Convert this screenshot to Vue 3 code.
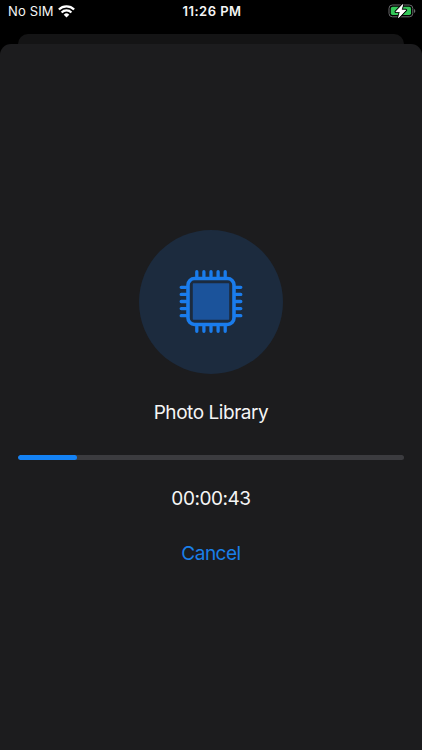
<script setup>
import { computed, ref } from 'vue';

const emit = defineEmits(['cancel']);

const title = ref('Photo Library');
const elapsed = ref(43);
const progress = ref(15.2);

const pins = [-14.2, -7.1, 0, 7.1, 14.2];

const elapsedLabel = computed(() => {
    const pad = (value) => String(value).padStart(2, '0');
    const hours = Math.floor(elapsed.value / 3600);
    const minutes = Math.floor((elapsed.value % 3600) / 60);

    return `${pad(hours)}:${pad(minutes)}:${pad(elapsed.value % 60)}`;
});
</script>

<template>
    <div class="screen">
        <header class="status-bar">
            <div class="status-left">
                <span class="carrier">No SIM</span>
                <svg class="wifi" width="17" height="13" viewBox="0 0 17 13" fill="none" stroke="#fff" stroke-width="2.3">
                    <path d="M.9 4.5a10.8 10.8 0 0 1 15.2 0" />
                    <path d="M3.6 7.5a6.9 6.9 0 0 1 9.8 0" />
                    <path d="M8.5 12.5 5.7 9.7a4 4 0 0 1 5.6 0z" fill="#fff" stroke="none" />
                </svg>
            </div>
            <span class="clock">11:26 PM</span>
            <div class="status-right">
                <svg width="28" height="16" viewBox="0 0 28 16">
                    <rect x="1" y="2" width="23.8" height="11.8" rx="3.4" fill="none" stroke="#68686b" />
                    <path d="M26 6v4c1.8-.6 1.8-3.4 0-4z" fill="#68686b" />
                    <rect x="2.8" y="3.8" width="20.2" height="8.2" rx="1.8" fill="#34c759" />
                    <path d="M14.8 1.4 7.9 8.7h4.3l-1.7 6 7.3-7.6h-4.5z" fill="#fff" stroke="#000" stroke-width="2.6" stroke-linejoin="round" paint-order="stroke" />
                    <path d="M14.8 1.4 7.9 8.7h4.3l-1.7 6 7.3-7.6h-4.5z" fill="#fff" stroke="#fff" stroke-width=".7" stroke-linejoin="round" />
                </svg>
            </div>
        </header>

        <div class="sheet-behind" />

        <main class="sheet">
            <div class="badge">
                <svg width="64" height="64" viewBox="-32 -31.5 64 64" fill="none" stroke="#1a7cec" stroke-linecap="round">
                    <g stroke-width="3.3">
                        <path v-for="pin in pins" :key="`v${pin}`" :d="`M${pin} -29.8V-25M${pin} 25V29.8`" />
                        <path v-for="pin in pins" :key="`h${pin}`" :d="`M-29.8 ${pin}H-25M25 ${pin}H29.8`" />
                    </g>
                    <rect x="-23" y="-23" width="46" height="46" rx="6.5" stroke-width="3.6" />
                    <rect x="-18.2" y="-18.2" width="36.4" height="36.4" rx=".6" fill="#1b539b" stroke="none" />
                </svg>
            </div>

            <h1 class="title">{{ title }}</h1>

            <div class="progress">
                <div class="progress-fill" :style="{ width: `${progress}%` }" />
            </div>

            <p class="elapsed">{{ elapsedLabel }}</p>

            <button type="button" class="cancel" @click="emit('cancel')">Cancel</button>
        </main>
    </div>
</template>

<style>
body{margin:0;background:#000}
</style>

<style scoped>
.screen{display:flex;flex-direction:column;height:750px;overflow:hidden;background:#000;color:#f5f5f5;font-family:Inter,"Liberation Sans",sans-serif}
.status-bar{display:grid;grid-template-columns:1fr auto 1fr;align-items:center;height:22px;margin-bottom:12px;padding:0 6px 0 8px;font-size:13px;line-height:22px}
.status-left{display:flex;align-items:center;gap:4.5px}
.carrier{letter-spacing:.15px}
.clock{font-weight:600;letter-spacing:.5px}
.status-right{display:flex;justify-content:flex-end}
.sheet-behind{flex:none;height:10px;margin:0 18px;border-radius:10px 10px 0 0;background:#141415}
.sheet{display:flex;flex:1;flex-direction:column;align-items:center;padding:185.5px 18px 0;border-radius:11px 11px 0 0;background:#1c1c1e}
.badge{display:flex;align-items:center;justify-content:center;width:144px;height:144px;border-radius:50%;background:#1c2b3e}
.title{margin:27.5px 0 0;font-size:19px;font-weight:400;line-height:24px;letter-spacing:-.45px}
.progress{align-self:stretch;height:5px;margin-top:30px;border-radius:3px;background:#3b3b3f;overflow:hidden}
.progress-fill{height:100%;border-radius:3px;background:#1482f5}
.elapsed{margin:27px 0 0;font-size:19px;line-height:24px;letter-spacing:-.45px}
.cancel{margin:31px 0 0;padding:0;border:0;background:none;color:#1a7fe8;font:inherit;font-size:19px;line-height:24px;letter-spacing:-.5px}
</style>
